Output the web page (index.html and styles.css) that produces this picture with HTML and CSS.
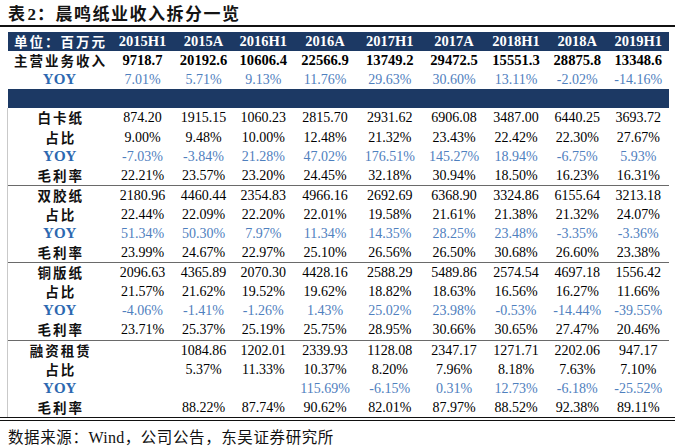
FILE: index.html
```html
<!DOCTYPE html>
<html lang="zh">
<head>
<meta charset="utf-8">
<title>晨鸣纸业收入拆分一览</title>
<link rel="stylesheet" href="styles.css">
</head>
<body>
<div class="title"><span class="t-cn">表</span><span class="t-num">2</span><span class="t-cn">：晨鸣纸业收入拆分一览</span></div>
<div class="rule-top"></div>
<table class="data">
  <colgroup>
    <col class="c-label"><col class="c1"><col class="c2"><col class="c3"><col class="c4"><col class="c5"><col class="c6"><col class="c7"><col class="c8"><col class="c9">
  </colgroup>
  <tr class="head">
    <td class="lbl">单位：百万元</td><td>2015H1</td><td>2015A</td><td>2016H1</td><td>2016A</td><td>2017H1</td><td>2017A</td><td>2018H1</td><td>2018A</td><td>2019H1</td>
  </tr>
  <tr class="total">
    <td class="lbl">主营业务收入</td><td>9718.7</td><td>20192.6</td><td>10606.4</td><td>22566.9</td><td>13749.2</td><td>29472.5</td><td>15551.3</td><td>28875.8</td><td>13348.6</td>
  </tr>
  <tr class="yoy">
    <td class="lbl yoy-l">YOY</td><td>7.01%</td><td>5.71%</td><td>9.13%</td><td>11.76%</td><td>29.63%</td><td>30.60%</td><td>13.11%</td><td>-2.02%</td><td>-14.16%</td>
  </tr>
  <tr class="band"><td colspan="10"></td></tr>

  <tr class="g-first">
    <td class="lbl">白卡纸</td><td>874.20</td><td>1915.15</td><td>1060.23</td><td>2815.70</td><td>2931.62</td><td>6906.08</td><td>3487.00</td><td>6440.25</td><td>3693.72</td>
  </tr>
  <tr>
    <td class="lbl">占比</td><td>9.00%</td><td>9.48%</td><td>10.00%</td><td>12.48%</td><td>21.32%</td><td>23.43%</td><td>22.42%</td><td>22.30%</td><td>27.67%</td>
  </tr>
  <tr class="yoy">
    <td class="lbl yoy-l">YOY</td><td>-7.03%</td><td>-3.84%</td><td>21.28%</td><td>47.02%</td><td>176.51%</td><td>145.27%</td><td>18.94%</td><td>-6.75%</td><td>5.93%</td>
  </tr>
  <tr>
    <td class="lbl">毛利率</td><td>22.21%</td><td>23.57%</td><td>23.20%</td><td>24.45%</td><td>32.18%</td><td>30.94%</td><td>18.50%</td><td>16.23%</td><td>16.31%</td>
  </tr>

  <tr class="g-sep">
    <td class="lbl">双胶纸</td><td>2180.96</td><td>4460.44</td><td>2354.83</td><td>4966.16</td><td>2692.69</td><td>6368.90</td><td>3324.86</td><td>6155.64</td><td>3213.18</td>
  </tr>
  <tr>
    <td class="lbl">占比</td><td>22.44%</td><td>22.09%</td><td>22.20%</td><td>22.01%</td><td>19.58%</td><td>21.61%</td><td>21.38%</td><td>21.32%</td><td>24.07%</td>
  </tr>
  <tr class="yoy">
    <td class="lbl yoy-l">YOY</td><td>51.34%</td><td>50.30%</td><td>7.97%</td><td>11.34%</td><td>14.35%</td><td>28.25%</td><td>23.48%</td><td>-3.35%</td><td>-3.36%</td>
  </tr>
  <tr>
    <td class="lbl">毛利率</td><td>23.99%</td><td>24.67%</td><td>22.97%</td><td>25.10%</td><td>26.56%</td><td>26.50%</td><td>30.68%</td><td>26.60%</td><td>23.38%</td>
  </tr>

  <tr class="g-sep">
    <td class="lbl">铜版纸</td><td>2096.63</td><td>4365.89</td><td>2070.30</td><td>4428.16</td><td>2588.29</td><td>5489.86</td><td>2574.54</td><td>4697.18</td><td>1556.42</td>
  </tr>
  <tr>
    <td class="lbl">占比</td><td>21.57%</td><td>21.62%</td><td>19.52%</td><td>19.62%</td><td>18.82%</td><td>18.63%</td><td>16.56%</td><td>16.27%</td><td>11.66%</td>
  </tr>
  <tr class="yoy">
    <td class="lbl yoy-l">YOY</td><td>-4.06%</td><td>-1.41%</td><td>-1.26%</td><td>1.43%</td><td>25.02%</td><td>23.98%</td><td>-0.53%</td><td>-14.44%</td><td>-39.55%</td>
  </tr>
  <tr>
    <td class="lbl">毛利率</td><td>23.71%</td><td>25.37%</td><td>25.19%</td><td>25.75%</td><td>28.95%</td><td>30.66%</td><td>30.65%</td><td>27.47%</td><td>20.46%</td>
  </tr>

  <tr class="g-sep">
    <td class="lbl">融资租赁</td><td></td><td>1084.86</td><td>1202.01</td><td>2339.93</td><td>1128.08</td><td>2347.17</td><td>1271.71</td><td>2202.06</td><td>947.17</td>
  </tr>
  <tr>
    <td class="lbl">占比</td><td></td><td>5.37%</td><td>11.33%</td><td>10.37%</td><td>8.20%</td><td>7.96%</td><td>8.18%</td><td>7.63%</td><td>7.10%</td>
  </tr>
  <tr class="yoy">
    <td class="lbl yoy-l">YOY</td><td></td><td></td><td></td><td>115.69%</td><td>-6.15%</td><td>0.31%</td><td>12.73%</td><td>-6.18%</td><td>-25.52%</td>
  </tr>
  <tr>
    <td class="lbl">毛利率</td><td></td><td>88.22%</td><td>87.74%</td><td>90.62%</td><td>82.01%</td><td>87.97%</td><td>88.52%</td><td>92.38%</td><td>89.11%</td>
  </tr>
</table>
<div class="rule-bottom"></div>
<div class="source">数据来源：<span class="src-en">Wind</span>，公司公告，东吴证券研究所</div>
</body>
</html>
```

FILE: styles.css
```css
html, body {
  margin: 0;
  padding: 0;
  background: #ffffff;
}

body {
  width: 675px;
  height: 447px;
  overflow: hidden;
  font-family: "Liberation Serif", "Noto Sans CJK SC", serif;
  color: #000;
}

.title {
  height: 25px;
  padding-left: 8px;
  font-weight: 700;
  font-size: 17px;
  line-height: 25px;
  color: #141414;
  white-space: nowrap;
}

.t-cn {
  font-family: "Noto Sans CJK SC", sans-serif;
  letter-spacing: 1.5px;
}

.t-num {
  font-family: "Liberation Serif", serif;
  padding: 0 1px 0 1px;
}

.rule-top {
  height: 2px;
  background: #111;
}

.data {
  margin: 5px 0 0 7px;
  border-collapse: collapse;
  table-layout: fixed;
  width: 661px;
}

.c-label { width: 104px; }
.c1 { width: 62px; }
.c2 { width: 60px; }
.c3 { width: 59.5px; }
.c4 { width: 64px; }
.c5 { width: 65.5px; }
.c6 { width: 63px; }
.c7 { width: 61px; }
.c8 { width: 61.5px; }
.c9 { width: 60.5px; }

.data tr {
  height: 19.1px;
}

.data td {
  height: 19.1px;
  padding: 0;
  text-align: center;
  vertical-align: middle;
  font-size: 14px;
  line-height: 15px;
  white-space: nowrap;
  overflow: hidden;
}

.data .lbl {
  font-family: "Noto Sans CJK SC", sans-serif;
  font-weight: 700;
  font-size: 13.5px;
  line-height: 15px;
  letter-spacing: 2px;
  padding-left: 2px;
  color: #111;
}

.data .yoy-l {
  font-family: "Liberation Serif", serif;
  font-size: 15px;
  letter-spacing: 0;
  padding-left: 0;
  color: #2c68b0;
}

.head td {
  background: #1c3964;
  color: #ffffff;
  font-weight: 700;
  font-size: 14.5px;
}

.head .lbl {
  color: #ffffff;
}

.total td {
  font-weight: 700;
  font-size: 14.6px;
}

.yoy td {
  color: #4f80be;
}

.band td {
  background: #1c3964;
}

.g-first td:first-child,
.g-first ~ tr td:first-child {
  border-left: 1px solid #c9c9c9;
}

.g-sep td {
  border-top: 1px solid #6a6a6a;
}

.rule-bottom {
  height: 4px;
  background: linear-gradient(#111 0, #111 1.5px, #fff 1.5px, #fff 3px, #111 3px, #111 4px);
}

.source {
  padding: 5px 0 0 8px;
  font-family: "Noto Sans CJK SC", sans-serif;
  font-size: 15.5px;
  line-height: 21px;
  letter-spacing: 0.6px;
  color: #111;
  white-space: nowrap;
}

.src-en {
  font-family: "Liberation Serif", serif;
  font-size: 16px;
  letter-spacing: 0.3px;
}
```
